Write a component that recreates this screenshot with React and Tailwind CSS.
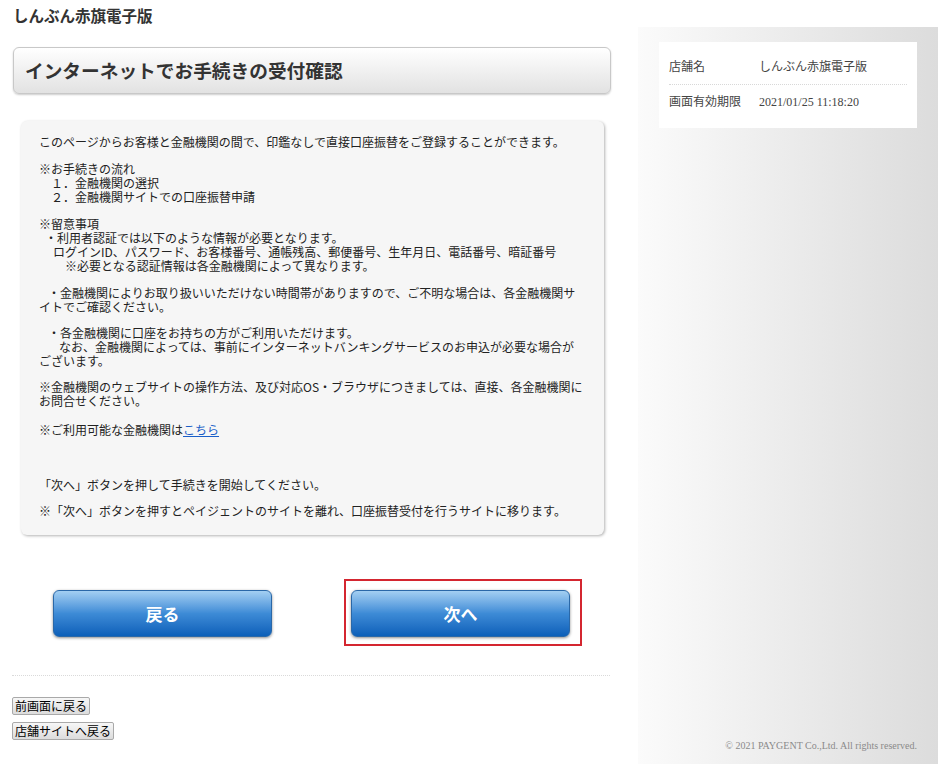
import React from "react";

const jp = { fontFamily: '"Noto Sans CJK JP", "Liberation Sans", sans-serif' };
const mix = { fontFamily: '"Liberation Serif", "Noto Sans CJK JP", serif' };

function BlueButton({ children }) {
  return (
    <button className="w-[219px] h-[47px] rounded-[6px] border border-[#2a68a8] bg-linear-to-b from-[#a3cff2] via-[#3d8bd6] to-[#0a5fb9] text-white text-[17px] font-bold shadow-[0_1px_3px_rgba(0,0,0,0.45)] flex items-center justify-center">
      {children}
    </button>
  );
}

function SmallButton({ children }) {
  return (
    <button className="h-[18px] px-[2px] text-[12px] leading-[16px] text-black border border-[#a9a9a9] rounded-[2px] bg-linear-to-b from-[#f7f7f7] to-[#dcdcdc] whitespace-nowrap">
      {children}
    </button>
  );
}

export default function App() {
  return (
    <div className="w-[940px] min-h-[764px] flex bg-white text-[#333]" style={jp}>
      {/* main column */}
      <div className="ml-[12px] w-[600px] flex flex-col pt-[6px]">
        <div className="text-[15.5px] leading-[18px] font-bold text-[#333] pl-[1px]">しんぶん赤旗電子版</div>

        <div className="mt-[23px] mx-[1px] h-[47px] rounded-[6px] border border-[#c8c8c8] bg-linear-to-b from-white to-[#e2e2e2] shadow-[0_1px_2px_rgba(0,0,0,0.2)] flex items-center pl-[11px]">
          <h1 className="text-[18.7px] font-bold text-[#333]">インターネットでお手続きの受付確認</h1>
        </div>

        <div className="mt-[27px] ml-[9px] w-[583px] rounded-[6px] bg-[#f6f6f6] shadow-[1px_1px_3px_rgba(0,0,0,0.3)] pl-[18px] pr-[10px] pt-[14px] pb-[17px] text-[12px] leading-[14px] text-[#222] whitespace-nowrap">
          <div>このページからお客様と金融機関の間で、印鑑なしで直接口座振替をご登録することができます。</div>

          <div className="mt-[13px]">
            <div>※お手続きの流れ</div>
            <div className="pl-[12px]">１．金融機関の選択</div>
            <div className="pl-[12px]">２．金融機関サイトでの口座振替申請</div>
          </div>

          <div className="mt-[13px]">
            <div>※留意事項</div>
            <div className="pl-[6px]">・利用者認証では以下のような情報が必要となります。</div>
            <div className="pl-[14px]">ログインID、パスワード、お客様番号、通帳残高、郵便番号、生年月日、電話番号、暗証番号</div>
            <div className="pl-[26px]">※必要となる認証情報は各金融機関によって異なります。</div>
          </div>

          <div className="mt-[13px]">
            <div className="pl-[9px]">・金融機関によりお取り扱いいただけない時間帯がありますので、ご不明な場合は、各金融機関サ</div>
            <div>イトでご確認ください。</div>
          </div>

          <div className="mt-[12px]">
            <div className="pl-[9px]">・各金融機関に口座をお持ちの方がご利用いただけます。</div>
            <div className="pl-[20px]">なお、金融機関によっては、事前にインターネットバンキングサービスのお申込が必要な場合が</div>
            <div>ございます。</div>
          </div>

          <div className="mt-[12px]">
            <div>※金融機関のウェブサイトの操作方法、及び対応OS・ブラウザにつきましては、直接、各金融機関に</div>
            <div>お問合せください。</div>
          </div>

          <div className="mt-[15px]">
            ※ご利用可能な金融機関は<a href="#" className="text-[#1a5fc8] underline">こちら</a>
          </div>

          <div className="mt-[41px]">「次へ」ボタンを押して手続きを開始してください。</div>
          <div className="mt-[12px]">※「次へ」ボタンを押すとペイジェントのサイトを離れ、口座振替受付を行うサイトに移ります。</div>
        </div>

        <div className="mt-[55px] flex">
          <div className="ml-[41px]">
            <BlueButton>戻る</BlueButton>
          </div>
          <div className="ml-[79px] relative">
            <BlueButton>次へ</BlueButton>
            <div className="absolute top-[-11px] left-[-7px] right-[-12px] bottom-[-9px] border-2 border-[#d42630] pointer-events-none" />
          </div>
        </div>

        <div className="mt-[38px] w-[598px] border-t border-dotted border-[#dadada]" />

        <div className="mt-[21px] flex flex-col items-start gap-[7px]">
          <SmallButton>前画面に戻る</SmallButton>
          <SmallButton>店舗サイトへ戻る</SmallButton>
        </div>
      </div>

      {/* side panel */}
      <div className="ml-[26px] mt-[27px] w-[300px] bg-linear-to-r from-[#fbfbfb] to-[#dcdcdc] flex flex-col justify-between pt-[15px] pb-[11px] px-[21px]">
        <div className="bg-white pt-[17px] pb-[18px] px-[10px] text-[12px] leading-[16px] text-[#444]" style={mix}>
          <div className="flex pb-[9px] border-b border-dotted border-[#d8d8d8]">
            <div className="w-[90px]">店舗名</div>
            <div>しんぶん赤旗電子版</div>
          </div>
          <div className="flex pt-[9px]">
            <div className="w-[90px]">画面有効期限</div>
            <div>2021/01/25 11:18:20</div>
          </div>
        </div>
        <div className="text-right text-[10px] leading-[14px] text-[#8a8a8a]" style={{ fontFamily: '"Liberation Serif", serif' }}>
          © 2021 PAYGENT Co.,Ltd. All rights reserved.
        </div>
      </div>
    </div>
  );
}
